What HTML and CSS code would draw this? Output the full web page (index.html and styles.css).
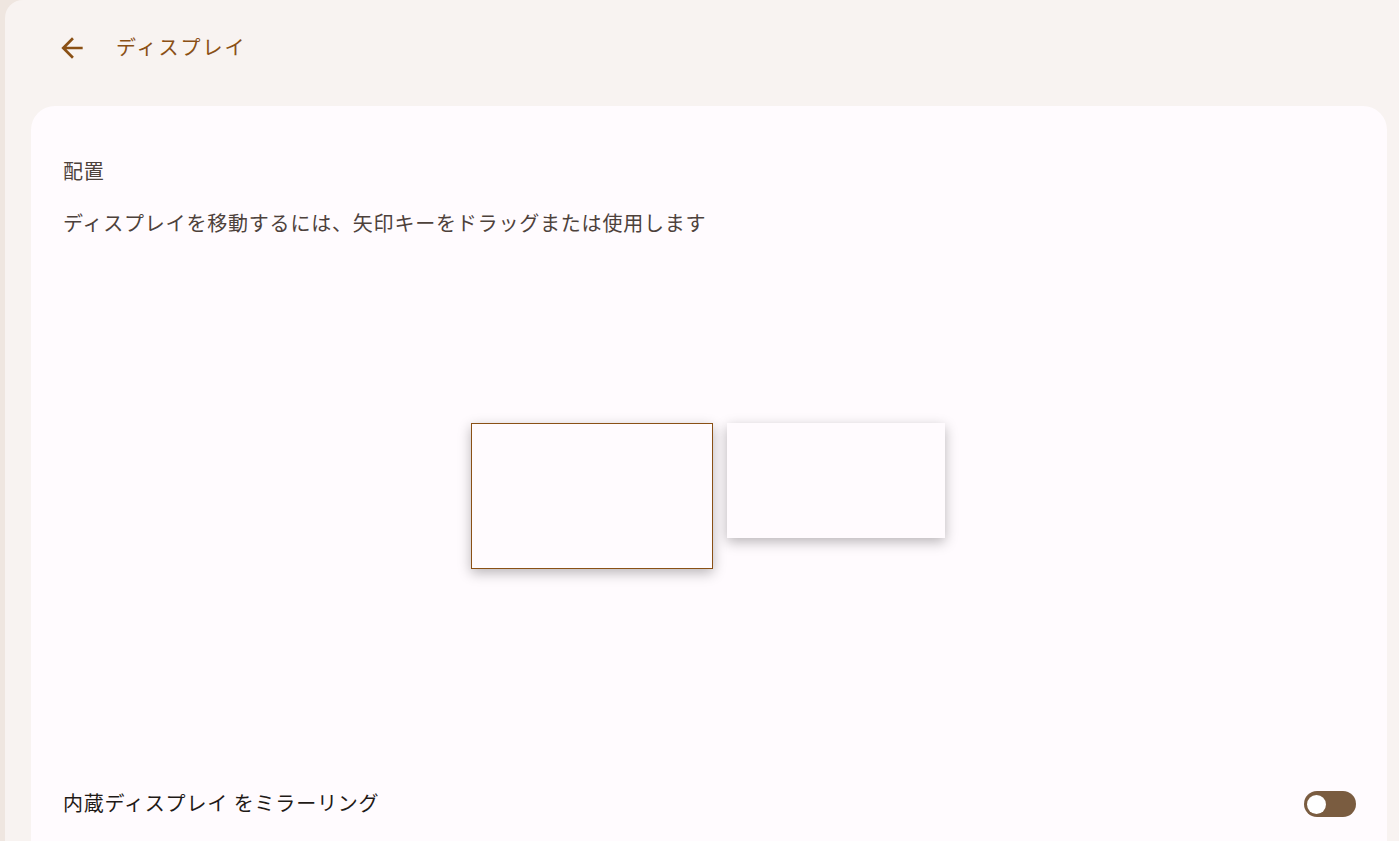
FILE: index.html
```html
<!DOCTYPE html>
<html lang="ja">
<head>
    <meta charset="UTF-8">
    <meta name="viewport" content="width=device-width, initial-scale=1.0">
    <title>ディスプレイ</title>
    <link rel="stylesheet" href="styles.css">
</head>
<body>

<div class="panel">
    <div class="header">
        <button class="back" aria-label="戻る">
            <svg width="32" height="32" viewBox="0 0 24 24">
                <path d="M20 11H7.83l5.59-5.59L12 4l-8 8 8 8 1.41-1.41L7.83 13H20v-2z" fill="currentColor"/>
            </svg>
        </button>
        <h1>ディスプレイ</h1>
    </div>

    <div class="card">
        <p class="label">配置</p>
        <p class="desc">ディスプレイを移動するには、矢印キーをドラッグまたは使用します</p>

        <div class="arrangement">
            <div class="screen primary"></div>
            <div class="screen secondary"></div>
        </div>

        <div class="row">
            <span>内蔵ディスプレイ をミラーリング</span>
            <div class="switch"><div class="knob"></div></div>
        </div>
    </div>
</div>

</body>
</html>
```

FILE: styles.css
```css
body {
    margin: 0;
    padding: 0;
    background-color: #efe6e0;
    font-family: 'Roboto', 'Noto Sans CJK JP', sans-serif;
    height: 100vh;
    overflow: hidden;
}

.panel {
    margin-left: 5px;
    height: 100vh;
    background-color: #f8f3f1;
    border-top-left-radius: 18px;
    padding: 0 12px 0 26px;
    display: flex;
    flex-direction: column;
}

.header {
    height: 106px;
    display: flex;
    align-items: center;
    padding-left: 25px;
    box-sizing: border-box;
    padding-bottom: 10px;
}

.back {
    width: 32px;
    height: 32px;
    padding: 0;
    border: none;
    background: none;
    color: #8a5015;
    display: flex;
}

.header h1 {
    margin: 0 0 0 28px;
    font-size: 20px;
    font-weight: 400;
    letter-spacing: 2px;
    color: #8a5015;
    line-height: 28px;
}

.card {
    flex: 1;
    background-color: #fffbfe;
    border-radius: 24px 24px 0 0;
    padding: 52px 31px 0 32px;
    color: #4d413b;
    letter-spacing: 0.8px;
}

.label,
.desc {
    margin: 0;
    font-size: 20px;
    line-height: 28px;
}

.desc {
    margin-top: 24px;
}

.arrangement {
    height: 536px;
    box-sizing: border-box;
    padding: 185px 4px 0 0;
    display: flex;
    justify-content: center;
    align-items: flex-start;
    gap: 14px;
}

.screen {
    background-color: #fffbfe;
    box-shadow: 0 4px 12px rgba(0, 0, 0, 0.28);
}

.primary {
    width: 240px;
    height: 144px;
    border: 1px solid #8a5015;
}

.secondary {
    width: 218px;
    height: 115px;
}

.row {
    height: 56px;
    display: flex;
    align-items: center;
    justify-content: space-between;
    font-size: 20px;
    color: #1f1a17;
}

.switch {
    width: 52px;
    height: 26px;
    border-radius: 13px;
    background-color: #7a5c40;
    display: flex;
    align-items: center;
    padding-left: 3px;
    box-sizing: border-box;
    margin-top: 4px;
}

.knob {
    width: 19px;
    height: 19px;
    border-radius: 50%;
    background-color: #ffffff;
}
```
